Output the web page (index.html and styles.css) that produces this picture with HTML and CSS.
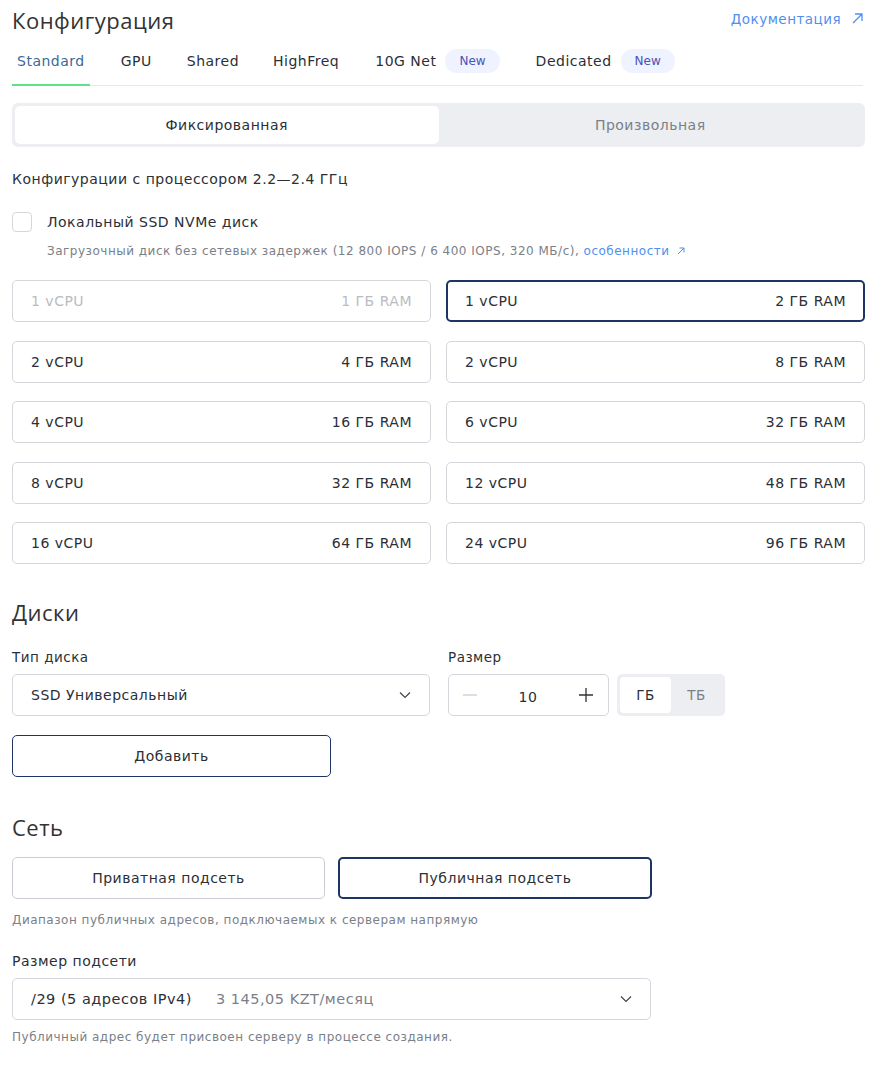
FILE: index.html
```html
<!DOCTYPE html>
<html lang="ru">
<head>
  <meta charset="UTF-8" />
  <meta name="viewport" content="width=device-width, initial-scale=1.0" />
  <title>Конфигурация сервера</title>
  <link rel="stylesheet" href="styles.css">
</head>
<body>
  <!-- ========== Конфигурация ========== -->
  <section class="block">
    <div class="head">
      <h2 class="title">Конфигурация</h2>
      <a class="link doc" href="#">Документация
        <svg class="ext" width="11" height="11" viewBox="0 0 11 11"><path d="M1 10L10 1M3 1h7v7" fill="none" stroke="currentColor" stroke-width="1.3"/></svg>
      </a>
    </div>

    <nav class="tabs">
      <a class="tab active" href="#">Standard</a>
      <a class="tab" href="#">GPU</a>
      <a class="tab" href="#">Shared</a>
      <a class="tab" href="#">HighFreq</a>
      <a class="tab" href="#">10G Net <span class="badge">New</span></a>
      <a class="tab" href="#">Dedicated <span class="badge">New</span></a>
    </nav>

    <div class="segment">
      <button class="seg on">Фиксированная</button>
      <button class="seg">Произвольная</button>
    </div>

    <p class="caption">Конфигурации с процессором 2.2—2.4 ГГц</p>

    <label class="check">
      <span class="box"></span>
      <span>Локальный SSD NVMe диск</span>
    </label>
    <p class="hint indent">Загрузочный диск без сетевых задержек (12 800 IOPS / 6 400 IOPS, 320 МБ/с), <a class="link" href="#">особенности
      <svg class="ext small" width="8" height="8" viewBox="0 0 8 8"><path d="M1 7L7 1M2.5 1H7v4.5" fill="none" stroke="currentColor" stroke-width="1"/></svg></a></p>

    <div class="plans">
      <div class="plan off"><span>1 vCPU</span><span>1 ГБ RAM</span></div>
      <div class="plan sel"><span>1 vCPU</span><span>2 ГБ RAM</span></div>
      <div class="plan"><span>2 vCPU</span><span>4 ГБ RAM</span></div>
      <div class="plan"><span>2 vCPU</span><span>8 ГБ RAM</span></div>
      <div class="plan"><span>4 vCPU</span><span>16 ГБ RAM</span></div>
      <div class="plan"><span>6 vCPU</span><span>32 ГБ RAM</span></div>
      <div class="plan"><span>8 vCPU</span><span>32 ГБ RAM</span></div>
      <div class="plan"><span>12 vCPU</span><span>48 ГБ RAM</span></div>
      <div class="plan"><span>16 vCPU</span><span>64 ГБ RAM</span></div>
      <div class="plan"><span>24 vCPU</span><span>96 ГБ RAM</span></div>
    </div>
  </section>

  <!-- ========== Диски ========== -->
  <section class="block disks">
    <h2 class="title">Диски</h2>
    <div class="disk-row">
      <div class="field type">
        <span class="label">Тип диска</span>
        <div class="select">
          <span>SSD Универсальный</span>
          <svg class="chev" width="14" height="14" viewBox="0 0 14 14"><path d="M2 4.5l5 5 5-5" fill="none" stroke="#444" stroke-width="1.2"/></svg>
        </div>
      </div>
      <div class="field">
        <span class="label">Размер</span>
        <div class="size">
          <div class="stepper">
            <svg width="16" height="16" viewBox="0 0 16 16"><path d="M1 8h14" stroke="#c5c9cf" stroke-width="1.2"/></svg>
            <span class="num">10</span>
            <svg width="16" height="16" viewBox="0 0 16 16"><path d="M1 8h14M8 1v14" stroke="#333" stroke-width="1.3"/></svg>
          </div>
          <div class="units">
            <span class="unit on">ГБ</span>
            <span class="unit">ТБ</span>
          </div>
        </div>
      </div>
    </div>
    <button class="btn add">Добавить</button>
  </section>

  <!-- ========== Сеть ========== -->
  <section class="block net">
    <h2 class="title">Сеть</h2>
    <div class="net-row">
      <button class="btn">Приватная подсеть</button>
      <button class="btn sel">Публичная подсеть</button>
    </div>
    <p class="hint">Диапазон публичных адресов, подключаемых к серверам напрямую</p>

    <span class="label">Размер подсети</span>
    <div class="select wide">
      <span>/29 (5 адресов IPv4)<span class="price">3 145,05 KZT/месяц</span></span>
      <svg class="chev" width="14" height="14" viewBox="0 0 14 14"><path d="M2 4.5l5 5 5-5" fill="none" stroke="#444" stroke-width="1.2"/></svg>
    </div>
    <p class="hint last">Публичный адрес будет присвоен серверу в процессе создания.</p>
  </section>
</body>
</html>
```

FILE: styles.css
```css
/* ========== Тема ========== */
:root {
  --text:   #2b2f36;
  --muted:  #7b8088;
  --line:   #d3d7dc;
  --navy:   #1e3563;
  --blue:   #4f8ff0;
  --fill:   #eceef1;
  --green:  #5fe08a;
}

* { box-sizing: border-box; margin: 0; padding: 0; }
body {
  background: #fff;
  color: var(--text);
  font-family: "DejaVu Sans", sans-serif;
  font-size: 14px;
  letter-spacing: 0.5px;
  padding: 6px 19px 20px 12px;
}
button { font: inherit; letter-spacing: inherit; color: inherit; background: none; border: none; cursor: pointer; }
a { text-decoration: none; }

.title {
  font-family: "Open Sans", "Noto Sans", sans-serif;
  font-weight: 400;
  font-size: 22px;
  line-height: 28px;
  letter-spacing: 0.5px;
  color: #333;
}
.link { color: var(--blue); }
.ext { margin-left: 6px; vertical-align: 0; }
.ext.small { margin-left: 3px; }

/* ====== шапка и вкладки ====== */
.head { display: flex; justify-content: space-between; align-items: flex-start; }
.doc { font-size: 13.5px; margin-top: 5px; margin-right: 2px; }

.tabs {
  display: flex;
  align-items: center;
  margin-top: 10px;
  border-bottom: 1px solid #e6e8eb;
  margin-right: 2px;
}
.tab {
  display: flex;
  align-items: center;
  height: 42px;
  padding: 0 5px 7px;
  color: var(--text);
  border-bottom: 2px solid transparent;
  margin-bottom: -1px;
}
.tab.active { color: #3c6a94; border-color: var(--green); }
.tab:nth-child(1) { margin-right: 26px; }
.tab:nth-child(2) { margin-right: 25px; }
.tab:nth-child(3) { margin-right: 24px; }
.tab:nth-child(4) { margin-right: 26px; }
.tab:nth-child(5) { margin-right: 26px; }
.badge {
  margin-left: 9px;
  font-size: 12px;
  letter-spacing: 0;
  color: #4a52b8;
  background: #eef3ff;
  border-radius: 12px;
  padding: 5px 14px;
}

/* ====== переключатель ====== */
.segment {
  display: grid;
  grid-template-columns: 1fr 1fr;
  background: var(--fill);
  border-radius: 6px;
  padding: 3px;
  margin-top: 17px;
  height: 44px;
}
.seg { font-size: 14px; color: var(--muted); border-radius: 5px; }
.seg.on { background: #fff; color: var(--text); }

.caption { margin-top: 24px; }

.check { display: flex; align-items: center; gap: 15px; margin-top: 25px; }
.box {
  width: 20px; height: 20px;
  border: 1px solid var(--line);
  border-radius: 4px;
}
.hint { font-size: 12px; letter-spacing: 0.5px; color: var(--muted); margin-top: 12px; }
.indent { padding-left: 35px; }

/* ====== тарифы ====== */
.plans {
  display: grid;
  grid-template-columns: 1fr 1fr;
  column-gap: 15px;
  row-gap: 18.5px;
  margin-top: 22px;
}
.plan {
  display: flex;
  justify-content: space-between;
  align-items: center;
  height: 42px;
  padding: 0 18px;
  border: 1px solid var(--line);
  border-radius: 5px;
}
.plan.off { color: #b8bcc2; }
.plan.sel { border: 2px solid var(--navy); padding: 0 17px; }

/* ====== диски ====== */
.disks { margin-top: 34px; }
.disk-row { display: flex; gap: 18px; margin-top: 23px; }
.field { display: flex; flex-direction: column; gap: 9px; }
.field.type { width: 418px; }
.label { font-size: 13.5px; display: block; }

.select {
  display: flex;
  justify-content: space-between;
  align-items: center;
  height: 42px;
  padding: 0 17px 0 18px;
  border: 1px solid var(--line);
  border-radius: 5px;
}
.size { display: flex; gap: 8px; }
.stepper {
  width: 161px; height: 42px;
  display: flex; align-items: center; justify-content: space-between;
  padding: 0 14px 0 13px;
  border: 1px solid var(--line);
  border-radius: 5px;
}
.num { margin-top: 3px; }
.units {
  display: flex;
  background: var(--fill);
  border-radius: 5px;
  padding: 3px;
  height: 42px;
  width: 108px;
}
.unit {
  flex: 1;
  display: flex; align-items: center; justify-content: center;
  font-size: 13.5px; color: var(--muted);
  border-radius: 4px;
}
.unit.on { background: #fff; color: var(--text); }

.btn {
  height: 42px;
  border: 1px solid #c9cdd3;
  border-radius: 5px;
}
.btn.sel { border: 2px solid var(--navy); }
.add { width: 319px; margin-top: 19px; border: 1.5px solid var(--navy); }

/* ====== сеть ====== */
.net { margin-top: 36px; }
.net-row { display: grid; grid-template-columns: 313px 314px; gap: 13px; margin-top: 16px; }
.net .hint { margin-top: 14px; }
.net .hint.last { margin-top: 10px; }
.net .label { margin-top: 26px; margin-bottom: 9px; font-size: 14px; }
.select.wide { width: 639px; font-size: 14.5px; }
.price { color: var(--muted); margin-left: 24px; }
```
